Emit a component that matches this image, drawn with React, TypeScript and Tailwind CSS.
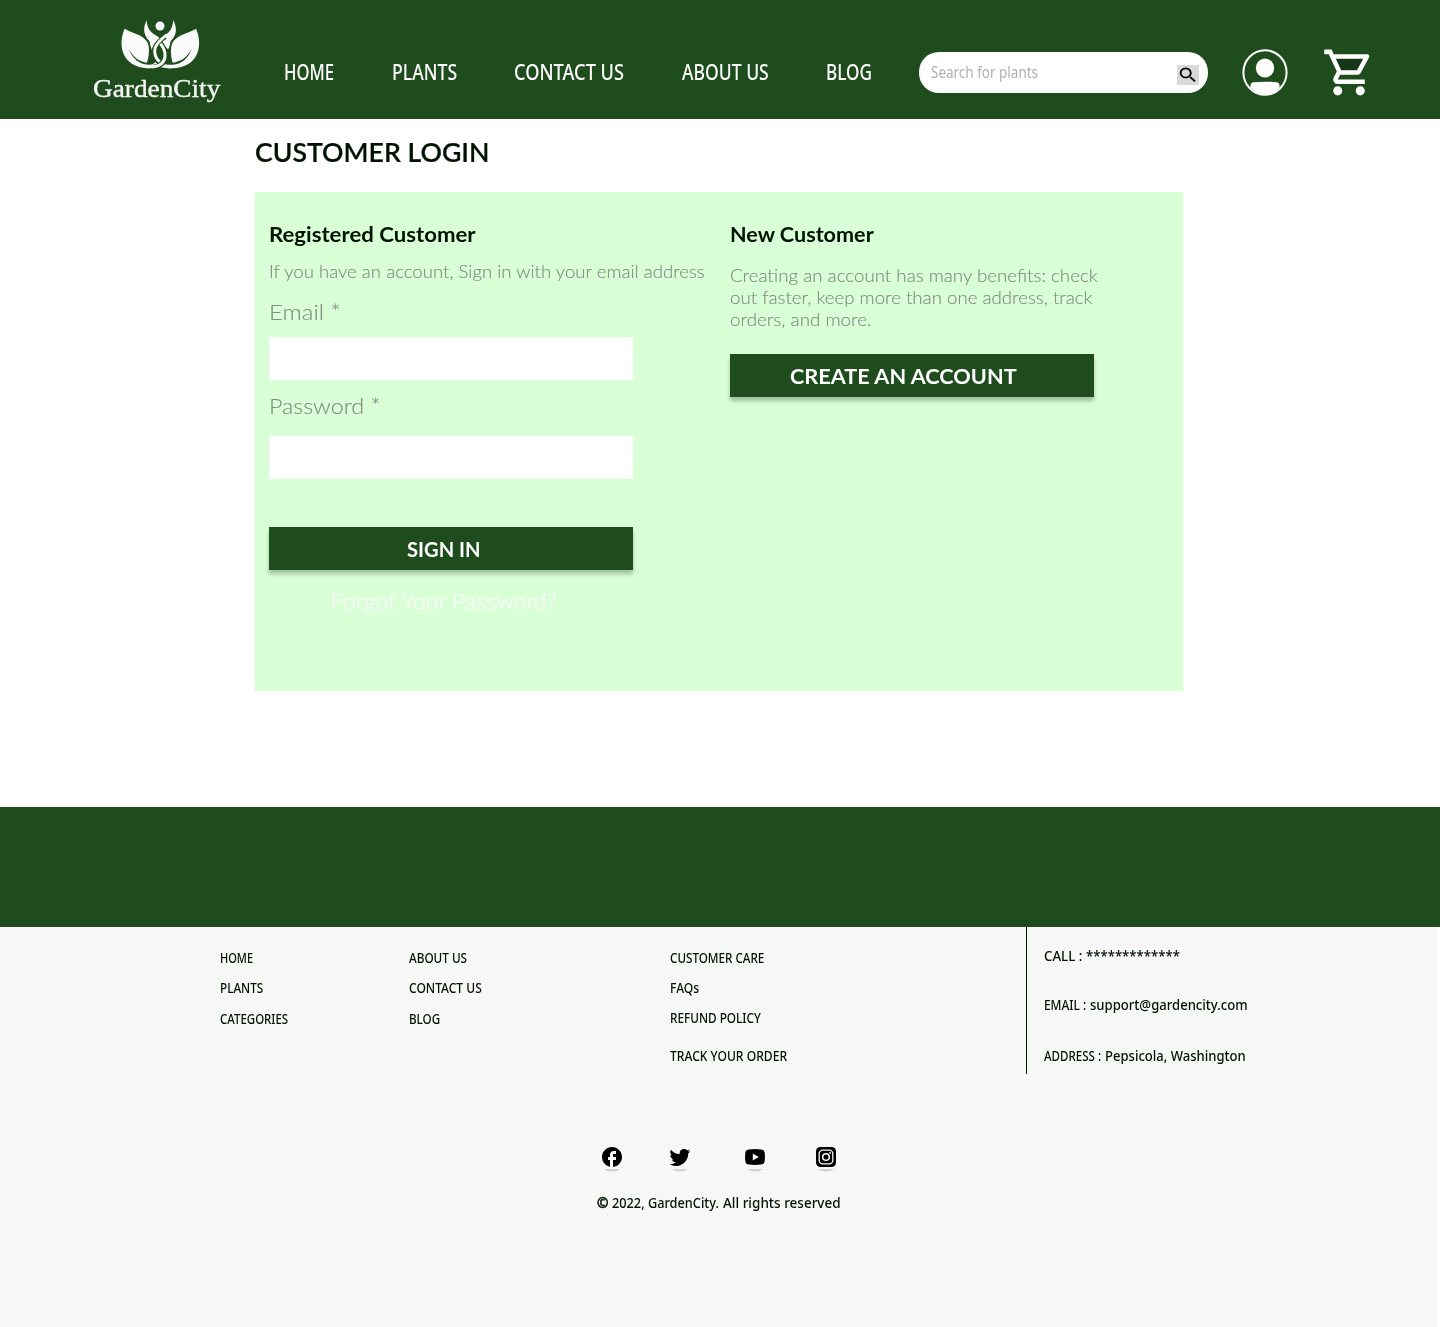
import { useLayoutEffect, useRef, useState, type ReactNode } from "react";

/** One line of text, stretched or condensed horizontally to a set width. */
function Line({ w, className = "", children }: { w: number; className?: string; children: ReactNode }) {
  const ref = useRef<HTMLSpanElement>(null);
  const [scale, setScale] = useState(1);
  useLayoutEffect(() => {
    if (ref.current) setScale(w / ref.current.offsetWidth);
  }, [w]);
  return (
    <span className={`block whitespace-nowrap ${className}`} style={{ width: w }}>
      <span ref={ref} className="inline-block origin-left" style={{ transform: `scaleX(${scale})` }}>
        {children}
      </span>
    </span>
  );
}

function Logo() {
  return (
    <div className="ml-[93px] mt-[18px] w-[128px]">
      <svg className="ml-[27px] block h-[52px] w-[80px]" viewBox="12 12 240 156" fill="#fafafa">
        <circle cx="132" cy="36" r="13.5" />
        <path d="M92 18C93 42 103 56 122 65L134 75L120 88C114 92 110 99 108 108C103 100 103 89 100 81C82 62 80 44 92 18Z" />
        <path d="M172 18C170 42 161 56 145 65L128 80L142 94L156 106C162 100 161 89 164 81C183 62 184 44 172 18Z" />
        <path d="M26 44C50 58 90 64 97 92C101 108 98 130 93 146C70 143 52 130 38 104C48 132 70 151 97 152C108 153 114 149 118 144L126 152C118 161 106 164 92 163C62 161 34 148 22 118C13 92 16 66 26 44Z" />
        <path d="M240 44C216 58 176 64 167 92C163 108 165 130 170 146C193 143 214 130 227 104C218 132 196 151 170 152C158 153 150 152 142 150L134 160C146 163 160 164 174 163C204 161 232 148 244 118C253 92 250 66 240 44Z" />
        <g fill="none" strokeLinecap="butt">
          <path d="M130 84C146 100 149 116 148 128C146 148 132 157 112 159" stroke="#1e4c1c" strokeWidth="14" />
          <path d="M128 84C145 100 148 116 147 128C145 148 132 157 108 159" stroke="#fafafa" strokeWidth="9" />
          <path d="M148 68C126 82 114 96 115 112C116 128 122 136 130 142" stroke="#1e4c1c" strokeWidth="14" />
          <path d="M153 62C126 82 115 96 116 112C117 128 122 136 131 143" stroke="#fafafa" strokeWidth="9" />
        </g>
      </svg>
      <Line w={127} className="mt-[2px] font-['Liberation_Serif'] text-[26px] leading-[34px] text-[#f5f5f5] [-webkit-text-stroke:0.4px_#f5f5f5]">
        GardenCity
      </Line>
    </div>
  );
}

const navItems = [
  { label: "HOME", w: 50, cls: "ml-[63px]" },
  { label: "PLANTS", w: 65, cls: "ml-[58px]" },
  { label: "CONTACT US", w: 110, cls: "ml-[57px]" },
  { label: "ABOUT US", w: 87, cls: "ml-[58px]" },
  { label: "BLOG", w: 46, cls: "ml-[57px]" },
];

function Header() {
  return (
    <header className="flex h-[119px] items-start bg-[#1e4c1c]">
      <Logo />
      <nav className="flex pt-[55px] font-['Noto_Sans'] text-[22px] font-medium leading-[32px] text-white">
        {navItems.map((n) => (
          <a key={n.label} className={n.cls}>
            <Line w={n.w}>{n.label}</Line>
          </a>
        ))}
      </nav>
      <div className="ml-[47px] mt-[52px] flex h-[41px] w-[289px] items-start rounded-[20px] bg-white pl-[12px] pr-[9px]">
        <Line w={107} className="mt-[8px] font-['Noto_Sans'] text-[15.5px] leading-[24px] text-[#b0b0b0]">
          Search for plants
        </Line>
        <button className="ml-auto mt-[13px] h-[20px] w-[22px] bg-[#d9d9d9]">
          <svg className="h-[20px] w-[22px]" viewBox="0 0 24 24" preserveAspectRatio="none">
            <path d="M15.5 14h-.79l-.28-.27A6.471 6.471 0 0 0 16 9.5 6.5 6.5 0 1 0 9.5 16c1.61 0 3.09-.59 4.23-1.57l.27.28v.79l5 4.99L20.49 19l-4.99-5zm-6 0C7.01 14 5 11.99 5 9.5S7.01 5 9.5 5 14 7.01 14 9.5 11.99 14 9.5 14z" />
          </svg>
        </button>
      </div>
      <svg className="ml-[34px] mt-[49px] h-[47px] w-[46px]" viewBox="0 0 46 47" fill="#fff">
        <ellipse cx="23" cy="23.5" rx="21.6" ry="22.2" fill="none" stroke="#fff" strokeWidth="2" />
        <ellipse cx="23" cy="19" rx="9.2" ry="9.5" />
        <path d="M8.5 38.5V36Q8.5 33.6 11 33.2Q23 32.2 35 33.2Q37.5 33.6 37.5 36V38.5Q31 46 23 46T8.5 38.5Z" />
      </svg>
      <svg className="ml-[34px] mt-[45px] h-[55px] w-[54px]" viewBox="0 0 24 24" preserveAspectRatio="none" fill="#fff">
        <path d="M6.16 6h12.15l-2.76 5H8.53z" fill="#173818" />
        <path d="M15.55 13c.75 0 1.41-.41 1.75-1.03l3.58-6.49A.996.996 0 0 0 20.01 4H5.21l-.94-2H1v2h2l3.6 7.59-1.35 2.44C4.52 15.37 5.48 17 7 17h12v-2H7l1.1-2h7.45zM6.16 6h12.15l-2.76 5H8.53L6.16 6zM7 18c-1.1 0-1.99.9-1.99 2S5.9 22 7 22s2-.9 2-2-.9-2-2-2zm10 0c-1.1 0-1.99.9-1.99 2s.89 2 1.99 2 2-.9 2-2-.9-2-2-2z" />
      </svg>
    </header>
  );
}

function Login() {
  return (
    <main className="h-[688px] bg-white pl-[255px] pt-[15px] font-['Lato'] text-[#001200]">
      <h1 className="text-[27px] font-semibold leading-[36px] [-webkit-text-stroke:0.2px_#001200]">
        <Line w={234}>CUSTOMER LOGIN</Line>
      </h1>
      <section className="mt-[22px] flex h-[499px] w-[928px] bg-[#d8ffd6] pl-[14px]">
        <div className="w-[461px] pt-[27px] text-[#858b85]">
          <h2 className="text-[21px] font-bold leading-[30px] text-[#001200]">
            <Line w={207}>Registered Customer</Line>
          </h2>
          <Line w={436} className="mt-[11px] text-[18px] font-light leading-[22px] [-webkit-text-stroke:0.15px_#858b85]">
            If you have an account, Sign in with your email address
          </Line>
          <Line w={72} className="mt-[15px] text-[22px] font-light leading-[30px] [-webkit-text-stroke:0.15px_#858b85]">
            Email *
          </Line>
          <input className="mt-[10px] block h-[43px] w-[364px] bg-white" />
          <Line w={111} className="mt-[11px] text-[22px] font-light leading-[30px] [-webkit-text-stroke:0.15px_#858b85]">
            Password *
          </Line>
          <input className="mt-[15px] block h-[43px] w-[364px] bg-white" />
          <button className="mt-[48px] block h-[43px] w-[364px] bg-[#1e4c1c] pl-[138px] pt-[2px] text-left text-[21.5px] font-bold leading-[41px] text-white shadow-[0_4px_4px_rgba(0,0,0,0.25)]">
            <Line w={74}>SIGN IN</Line>
          </button>
          <Line w={226} className="ml-[62px] mt-[16px] text-[22px] font-light leading-[30px] text-white [-webkit-text-stroke:0.2px_#fff]">
            Forgot Your Password?
          </Line>
        </div>
        <div className="pt-[27px]">
          <h2 className="text-[21px] font-bold leading-[30px]">
            <Line w={144}>New Customer</Line>
          </h2>
          <div className="mt-[15px] text-[18px] font-light leading-[22px] text-[#858b85] [-webkit-text-stroke:0.15px_#858b85]">
            <Line w={368}>Creating an account has many benefits: check</Line>
            <Line w={362}>out faster, keep more than one address, track</Line>
            <Line w={141}>orders, and more.</Line>
          </div>
          <button className="mt-[24px] block h-[43px] w-[364px] bg-[#1e4c1c] pl-[60px] pt-[2px] text-left text-[21.5px] font-bold leading-[41px] text-white shadow-[0_4px_4px_rgba(0,0,0,0.25)]">
            <Line w={227}>CREATE AN ACCOUNT</Line>
          </button>
        </div>
      </section>
    </main>
  );
}

const socials = [
  {
    name: "Facebook",
    cls: "",
    icon: (
      <path
        transform="translate(-2 -2)"
        d="M22 12c0-5.52-4.48-10-10-10S2 6.48 2 12c0 4.84 3.44 8.87 8 9.8V15H8v-3h2V9.5C10 7.57 11.57 6 13.5 6H16v3h-2c-.55 0-1 .45-1 1v2h3v3h-3v6.95c5.05-.5 9-4.76 9-9.95z"
      />
    ),
  },
  {
    name: "Twitter",
    cls: "ml-[48px]",
    icon: (
      <path
        transform="translate(-2.1 -2)"
        d="M22.46 6c-.77.35-1.6.58-2.46.69.88-.53 1.56-1.37 1.88-2.38-.83.5-1.75.85-2.72 1.05C18.37 4.5 17.26 4 16 4c-2.35 0-4.27 1.92-4.27 4.29 0 .34.04.67.11.98C8.28 9.09 5.11 7.38 3 4.79c-.37.63-.58 1.37-.58 2.15 0 1.49.75 2.81 1.91 3.56-.71 0-1.37-.2-1.95-.5v.03c0 2.08 1.48 3.82 3.44 4.21a4.22 4.22 0 0 1-1.93.07 4.28 4.28 0 0 0 4 2.98 8.521 8.521 0 0 1-5.33 1.84c-.34 0-.68-.02-1.02-.06C3.44 20.29 5.7 21 8.12 21 16 21 20.33 14.46 20.33 8.79c0-.19 0-.37-.01-.56.84-.6 1.56-1.36 2.14-2.23z"
      />
    ),
  },
  {
    name: "YouTube",
    cls: "ml-[55px]",
    icon: (
      <path
        fillRule="evenodd"
        d="M4 2.4Q10 1.7 16 2.4Q19.2 2.7 19.6 5.5Q20.3 10 19.6 14.5Q19.2 17.3 16 17.6Q10 18.3 4 17.6Q.8 17.3.4 14.5Q-.3 10 .4 5.5Q.8 2.7 4 2.4ZM7.8 6.6V13.4L13.8 10Z"
      />
    ),
  },
  {
    name: "Instagram",
    cls: "ml-[51px]",
    icon: (
      <>
        <rect width="20" height="20" rx="4.5" />
        <rect x="3.2" y="3.2" width="13.6" height="13.6" rx="3.6" fill="none" stroke="#f7f7f7" strokeWidth="1.3" />
        <circle cx="10" cy="10" r="3.3" fill="none" stroke="#f7f7f7" strokeWidth="1.5" />
        <circle cx="14.1" cy="5.9" r="0.9" fill="#f7f7f7" />
      </>
    ),
  },
];

function Social() {
  return (
    <div className="ml-[602px] mt-[73px] flex h-[20px] items-start">
      {socials.map((s) => (
        <svg key={s.name} aria-label={s.name} className={`h-[20px] w-[20px] overflow-visible ${s.cls}`} viewBox="0 0 20 20">
          <path d="M2 22H18Q15 24.5 10 24.5T2 22Z" className="opacity-15 blur-[0.6px]" />
          {s.icon}
        </svg>
      ))}
    </div>
  );
}

function Footer() {
  return (
    <footer>
      <div className="h-[120px] bg-[#1e4c1c]" />
      <div className="h-[400px] w-[1437px] bg-[#f7f7f7] font-['Noto_Sans'] text-[15px] font-medium leading-[20px] text-[#001200]">
        <div className="flex h-[147px]">
          <div className="ml-[220px] w-[189px] pt-[20px]">
            <Line w={33}>HOME</Line>
            <Line w={43} className="mt-[10px]">PLANTS</Line>
            <Line w={68} className="mt-[11px]">CATEGORIES</Line>
          </div>
          <div className="w-[261px] pt-[20px]">
            <Line w={58}>ABOUT US</Line>
            <Line w={73} className="mt-[10px]">CONTACT US</Line>
            <Line w={31} className="mt-[11px]">BLOG</Line>
          </div>
          <div className="w-[356px] pt-[20px]">
            <Line w={94}>CUSTOMER CARE</Line>
            <Line w={29} className="mt-[10px]">FAQs</Line>
            <Line w={91} className="mt-[10px]">REFUND POLICY</Line>
            <Line w={117} className="mt-[18px]">TRACK YOUR ORDER</Line>
          </div>
          <div className="border-l border-[#001200] pl-[17px] pt-[18px]">
            <div className="flex">
              <Line w={38}>CALL :</Line>
              <Line w={94} className="ml-[4px]">*************</Line>
            </div>
            <div className="mt-[29px] flex">
              <Line w={42}>EMAIL :</Line>
              <Line w={158} className="ml-[4px]">support@gardencity.com</Line>
            </div>
            <div className="mt-[31px] flex">
              <Line w={57}>ADDRESS :</Line>
              <Line w={141} className="ml-[4px]">Pepsicola, Washington</Line>
            </div>
          </div>
        </div>
        <Social />
        <div className="ml-[597px] mt-[25px] flex">
          <Line w={11} className="font-bold [-webkit-text-stroke:0.5px_#001200]">©</Line>
          <Line w={107} className="ml-[4px]">2022, GardenCity.</Line>
          <Line w={118} className="ml-[4px]">All rights reserved</Line>
        </div>
      </div>
    </footer>
  );
}

export default function App() {
  return (
    <div className="h-[1327px] w-[1440px] overflow-hidden bg-white">
      <Header />
      <Login />
      <Footer />
    </div>
  );
}
